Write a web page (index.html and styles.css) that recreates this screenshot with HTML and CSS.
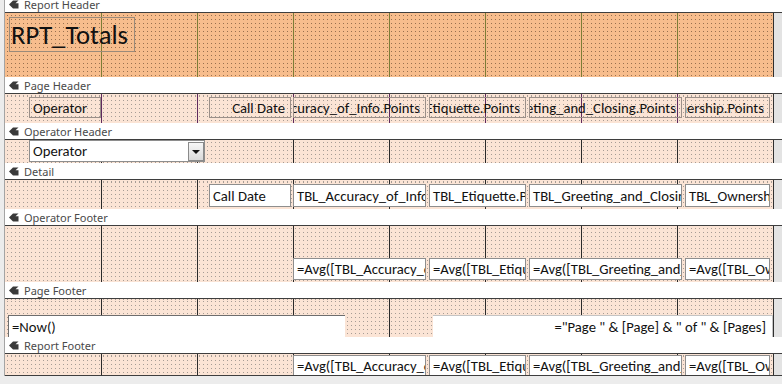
FILE: index.html
```html
<!DOCTYPE html>
<html>
<head>
  <title>RPT_Totals - Design View</title>
  <link rel="stylesheet" href="styles.css">
</head>
<body>
  <div class="designer">

    <div class="bar"><svg class="grip" width="10" height="9" viewBox="0 0 10 9"><polygon points="0,4.5 4,0.5 9.5,0.5 6.5,3.2 9.5,3.2 9.5,8.5 4,8.5"/></svg>Report Header</div>
    <div class="row">
      <div class="sec orange h-rh">
        <div class="ctl title">RPT_Totals</div>
      </div>
      <div class="gutter"></div>
    </div>

    <div class="bar"><svg class="grip" width="10" height="9" viewBox="0 0 10 9"><polygon points="0,4.5 4,0.5 9.5,0.5 6.5,3.2 9.5,3.2 9.5,8.5 4,8.5"/></svg>Page Header</div>
    <div class="row">
      <div class="sec peach purple h-ph">
        <div class="ctl lbl c-op">Operator</div>
        <div class="ctl lbl right c-date">Call Date</div>
        <div class="ctl lbl right c-acc">TBL_Accuracy_of_Info.Points</div>
        <div class="ctl lbl right c-eti">TBL_Etiquette.Points</div>
        <div class="ctl lbl right c-gre">TBL_Greeting_and_Closing.Points</div>
        <div class="ctl lbl right c-own">TBL_Ownership.Points</div>
      </div>
      <div class="gutter"></div>
    </div>

    <div class="bar"><svg class="grip" width="10" height="9" viewBox="0 0 10 9"><polygon points="0,4.5 4,0.5 9.5,0.5 6.5,3.2 9.5,3.2 9.5,8.5 4,8.5"/></svg>Operator Header</div>
    <div class="row">
      <div class="sec peach h-oh">
        <div class="ctl box combo">Operator<span class="drop"></span></div>
      </div>
      <div class="gutter"></div>
    </div>

    <div class="bar"><svg class="grip" width="10" height="9" viewBox="0 0 10 9"><polygon points="0,4.5 4,0.5 9.5,0.5 6.5,3.2 9.5,3.2 9.5,8.5 4,8.5"/></svg>Detail</div>
    <div class="row">
      <div class="sec peach h-dt">
        <div class="ctl box c-date">Call Date</div>
        <div class="ctl box c-acc">TBL_Accuracy_of_Info.Points</div>
        <div class="ctl box c-eti">TBL_Etiquette.Points</div>
        <div class="ctl box c-gre">TBL_Greeting_and_Closing.Points</div>
        <div class="ctl box c-own">TBL_Ownership.Points</div>
      </div>
      <div class="gutter"></div>
    </div>

    <div class="bar"><svg class="grip" width="10" height="9" viewBox="0 0 10 9"><polygon points="0,4.5 4,0.5 9.5,0.5 6.5,3.2 9.5,3.2 9.5,8.5 4,8.5"/></svg>Operator Footer</div>
    <div class="row">
      <div class="sec peach h-of">
        <div class="ctl box c-acc">=Avg([TBL_Accuracy_of_Info].[Points])</div>
        <div class="ctl box c-eti">=Avg([TBL_Etiquette].[Points])</div>
        <div class="ctl box c-gre">=Avg([TBL_Greeting_and_Closing].[Points])</div>
        <div class="ctl box c-own">=Avg([TBL_Ownership].[Points])</div>
      </div>
      <div class="gutter"></div>
    </div>

    <div class="bar"><svg class="grip" width="10" height="9" viewBox="0 0 10 9"><polygon points="0,4.5 4,0.5 9.5,0.5 6.5,3.2 9.5,3.2 9.5,8.5 4,8.5"/></svg>Page Footer</div>
    <div class="row">
      <div class="sec peach h-pf">
        <div class="ctl box now">=Now()</div>
        <div class="ctl box right pages">="Page " &amp; [Page] &amp; " of " &amp; [Pages]</div>
      </div>
      <div class="gutter"></div>
    </div>

    <div class="bar"><svg class="grip" width="10" height="9" viewBox="0 0 10 9"><polygon points="0,4.5 4,0.5 9.5,0.5 6.5,3.2 9.5,3.2 9.5,8.5 4,8.5"/></svg>Report Footer</div>
    <div class="row last">
      <div class="sec peach h-rf">
        <div class="ctl box c-acc">=Avg([TBL_Accuracy_of_Info].[Points])</div>
        <div class="ctl box c-eti">=Avg([TBL_Etiquette].[Points])</div>
        <div class="ctl box c-gre">=Avg([TBL_Greeting_and_Closing].[Points])</div>
        <div class="ctl box c-own">=Avg([TBL_Ownership].[Points])</div>
      </div>
      <div class="gutter"></div>
    </div>

  </div>
</body>
</html>
```

FILE: styles.css
```css
/* Report design surface */
body {
  margin: 0;
  background-color: #ececec;
  font-family: 'Noto Sans', 'Liberation Sans', sans-serif;
  overflow: hidden;
}

.designer {
  margin-top: -4px;
  margin-left: 4px;
  border-left: 1px solid #a4a4a4;
}

/* section bars */
.bar {
  display: flex;
  align-items: center;
  gap: 5px;
  height: 16px;
  padding-left: 4px;
  background-color: #fff;
  border-bottom: 1px solid #3e3e3e;
  font-size: 11px;
  color: #4a4a4a;
}

.grip {
  fill: #3a3a3a;
  flex: none;
}

/* section bodies */
.row {
  display: flex;
}

.row.last {
  border-bottom: 1px solid #3e3e3e;
}

.gutter {
  flex: 1;
  background-color: #e3e3e3;
}

.sec {
  --bg: #fbe4d5;
  --dot: #a69c95;
  --line: #2a2a2a;
  position: relative;
  flex: none;
  width: 768px;
  border-right: 1px solid #2f2f2f;
  background-color: var(--dot);
  background-image:
    repeating-linear-gradient(to right, transparent 0 95px, var(--line) 95px 96px),
    repeating-linear-gradient(to right, transparent 0 1px, var(--bg) 1px 4px),
    repeating-linear-gradient(to bottom, transparent 0 1px, var(--bg) 1px 4px);
  background-repeat: no-repeat, repeat, repeat;
  background-position: 1px 0, 2px 0, 0 2px;
}

.sec.orange {
  --bg: #f7bd8d;
  --dot: #98704f;
  --line: #7d7d36;
}

.sec.purple {
  --line: #5e2a5e;
}

.h-rh { height: 64px; }
.h-ph { height: 29px; }
.h-oh { height: 23px; }
.h-dt { height: 29px; }
.h-of { height: 56px; }
.h-pf { height: 38px; }
.h-rf { height: 21px; }

/* controls */
.ctl {
  position: absolute;
  box-sizing: border-box;
  display: flex;
  align-items: center;
  overflow: hidden;
  white-space: nowrap;
  padding: 0 3px;
  border: 1px solid #8e8e8e;
  font-family: Carlito, 'Liberation Sans', sans-serif;
  font-size: 14.67px;
  color: #111;
}

.ctl.box {
  background-color: #fff;
}

.ctl.right {
  justify-content: flex-end;
}

.title {
  left: 4px;
  top: 4px;
  width: 126px;
  height: 35px;
  padding: 0 1px;
  border-color: #9a8a7a;
  font-size: 26.67px;
}

.lbl {
  top: 3px;
  height: 21px;
  border-color: #9b8f88;
}

.lbl.right {
  padding-right: 5px;
}

.c-op { left: 24px; width: 72px; }
.c-date { left: 204px; width: 82px; }
.c-acc { left: 288px; width: 133px; }
.c-eti { left: 424px; width: 97px; }
.c-gre { left: 524px; width: 153px; }
.c-own { left: 680px; width: 85px; }

.h-dt .ctl { top: 4px; height: 23px; }
.h-of .ctl { top: 32px; height: 22px; }
.h-rf .ctl { top: 1px; height: 20px; border-bottom: none; }

.combo {
  left: 24px;
  top: 0;
  width: 176px;
  height: 22px;
  padding-left: 3px;
}

.drop {
  position: absolute;
  right: 0;
  top: 1px;
  width: 16px;
  height: 19px;
  box-sizing: border-box;
  border: 1px solid #8a8a8a;
  background: linear-gradient(#f7f7f7, #d9d9d9);
}

.drop::after {
  content: '';
  position: absolute;
  left: 3px;
  top: 7px;
  border-left: 4px solid transparent;
  border-right: 4px solid transparent;
  border-top: 4px solid #111;
}

.now {
  left: 3px;
  top: 16px;
  width: 337px;
  height: 22px;
  border-color: #6e6e6e;
  border-bottom: none;
  border-right: none;
}

.pages {
  left: 428px;
  top: 16px;
  width: 340px;
  height: 22px;
  padding-right: 6px;
  border-color: #c4c4c4;
  border-bottom: none;
  border-left: none;
}
```
